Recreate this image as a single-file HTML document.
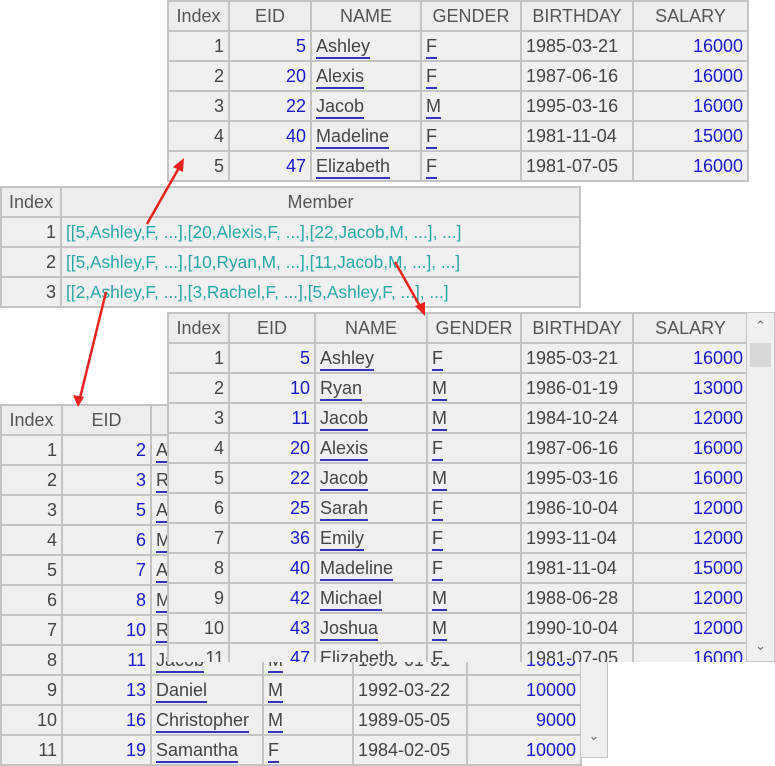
<!DOCTYPE html>
<html><head><meta charset="utf-8"><style>
body{margin:0;width:775px;height:754px;background:#fff;position:relative;overflow:hidden;font-family:"Liberation Sans",sans-serif;font-size:18px;color:#444}
table{position:absolute;border-collapse:collapse;table-layout:fixed;background:#f0f0f0}
td,th{border:2px solid #c4c4c4;height:28px;padding:0 4px;white-space:nowrap;overflow:hidden;font-weight:normal}
th{background:#ededed;color:#555;text-align:center}
td.i{text-align:right;color:#444}
td.e{text-align:right;color:#1a1acc}
td.n u{text-decoration:none;border-bottom:2px solid #3333bb;padding-bottom:1px}
td.m{color:#2aa7a7;font-size:17.3px}
.sb{position:absolute;background:#f0f0f0;border:1px solid #c4c4c4}
.btn{position:absolute;left:0;width:100%;height:26px;text-align:center;color:#666;font-size:13px;line-height:26px}
</style></head><body>

<table style="left:0;top:404px;width:580px">
<colgroup><col style="width:61px"><col style="width:89px"><col style="width:112px"><col style="width:90px"><col style="width:114px"><col style="width:114px"></colgroup>
<tr><th>Index</th><th>EID</th><th>NAME</th><th>GENDER</th><th>BIRTHDAY</th><th>SALARY</th></tr>
<tr><td class="i">1</td><td class="e">2</td><td class="n"><u>Ashley</u></td><td class="n"><u>F</u></td><td>1990-01-01</td><td class="e">10000</td></tr>
<tr><td class="i">2</td><td class="e">3</td><td class="n"><u>Rachel</u></td><td class="n"><u>F</u></td><td>1990-01-01</td><td class="e">10000</td></tr>
<tr><td class="i">3</td><td class="e">5</td><td class="n"><u>Ashley</u></td><td class="n"><u>F</u></td><td>1990-01-01</td><td class="e">10000</td></tr>
<tr><td class="i">4</td><td class="e">6</td><td class="n"><u>Matthew</u></td><td class="n"><u>M</u></td><td>1990-01-01</td><td class="e">10000</td></tr>
<tr><td class="i">5</td><td class="e">7</td><td class="n"><u>Alexis</u></td><td class="n"><u>F</u></td><td>1990-01-01</td><td class="e">10000</td></tr>
<tr><td class="i">6</td><td class="e">8</td><td class="n"><u>Megan</u></td><td class="n"><u>F</u></td><td>1990-01-01</td><td class="e">10000</td></tr>
<tr><td class="i">7</td><td class="e">10</td><td class="n"><u>Ryan</u></td><td class="n"><u>M</u></td><td>1990-01-01</td><td class="e">10000</td></tr>
<tr><td class="i">8</td><td class="e">11</td><td class="n"><u>Jacob</u></td><td class="n"><u>M</u></td><td>1990-01-01</td><td class="e">10000</td></tr>
<tr><td class="i">9</td><td class="e">13</td><td class="n"><u>Daniel</u></td><td class="n"><u>M</u></td><td>1992-03-22</td><td class="e">10000</td></tr>
<tr><td class="i">10</td><td class="e">16</td><td class="n"><u>Christopher</u></td><td class="n"><u>M</u></td><td>1989-05-05</td><td class="e">9000</td></tr>
<tr><td class="i">11</td><td class="e">19</td><td class="n"><u>Samantha</u></td><td class="n"><u>F</u></td><td>1984-02-05</td><td class="e">10000</td></tr>
</table>
<div class="sb" style="left:580px;top:404px;width:26px;height:352px"><div class="btn" style="top:318px">&#8964;</div></div>

<table style="left:167px;top:0;width:580px">
<colgroup><col style="width:61px"><col style="width:82px"><col style="width:110px"><col style="width:100px"><col style="width:112px"><col style="width:115px"></colgroup>
<tr><th>Index</th><th>EID</th><th>NAME</th><th>GENDER</th><th>BIRTHDAY</th><th>SALARY</th></tr>
<tr><td class="i">1</td><td class="e">5</td><td class="n"><u>Ashley</u></td><td class="n"><u>F</u></td><td>1985-03-21</td><td class="e">16000</td></tr>
<tr><td class="i">2</td><td class="e">20</td><td class="n"><u>Alexis</u></td><td class="n"><u>F</u></td><td>1987-06-16</td><td class="e">16000</td></tr>
<tr><td class="i">3</td><td class="e">22</td><td class="n"><u>Jacob</u></td><td class="n"><u>M</u></td><td>1995-03-16</td><td class="e">16000</td></tr>
<tr><td class="i">4</td><td class="e">40</td><td class="n"><u>Madeline</u></td><td class="n"><u>F</u></td><td>1981-11-04</td><td class="e">15000</td></tr>
<tr><td class="i">5</td><td class="e">47</td><td class="n"><u>Elizabeth</u></td><td class="n"><u>F</u></td><td>1981-07-05</td><td class="e">16000</td></tr>
</table>

<table style="left:0;top:186px;width:579px">
<colgroup><col style="width:60px"><col style="width:519px"></colgroup>
<tr><th>Index</th><th>Member</th></tr>
<tr><td class="i">1</td><td class="m">[[5,Ashley,F, ...],[20,Alexis,F, ...],[22,Jacob,M, ...], ...]</td></tr>
<tr><td class="i">2</td><td class="m">[[5,Ashley,F, ...],[10,Ryan,M, ...],[11,Jacob,M, ...], ...]</td></tr>
<tr><td class="i">3</td><td class="m">[[2,Ashley,F, ...],[3,Rachel,F, ...],[5,Ashley,F, ...], ...]</td></tr>
</table>

<div style="position:absolute;left:167px;top:312px;width:580px;height:350px;overflow:hidden;background:#f0f0f0">
<table style="left:0;top:0;width:580px">
<colgroup><col style="width:61px"><col style="width:86px"><col style="width:112px"><col style="width:94px"><col style="width:112px"><col style="width:115px"></colgroup>
<tr><th>Index</th><th>EID</th><th>NAME</th><th>GENDER</th><th>BIRTHDAY</th><th>SALARY</th></tr>
<tr><td class="i">1</td><td class="e">5</td><td class="n"><u>Ashley</u></td><td class="n"><u>F</u></td><td>1985-03-21</td><td class="e">16000</td></tr>
<tr><td class="i">2</td><td class="e">10</td><td class="n"><u>Ryan</u></td><td class="n"><u>M</u></td><td>1986-01-19</td><td class="e">13000</td></tr>
<tr><td class="i">3</td><td class="e">11</td><td class="n"><u>Jacob</u></td><td class="n"><u>M</u></td><td>1984-10-24</td><td class="e">12000</td></tr>
<tr><td class="i">4</td><td class="e">20</td><td class="n"><u>Alexis</u></td><td class="n"><u>F</u></td><td>1987-06-16</td><td class="e">16000</td></tr>
<tr><td class="i">5</td><td class="e">22</td><td class="n"><u>Jacob</u></td><td class="n"><u>M</u></td><td>1995-03-16</td><td class="e">16000</td></tr>
<tr><td class="i">6</td><td class="e">25</td><td class="n"><u>Sarah</u></td><td class="n"><u>F</u></td><td>1986-10-04</td><td class="e">12000</td></tr>
<tr><td class="i">7</td><td class="e">36</td><td class="n"><u>Emily</u></td><td class="n"><u>F</u></td><td>1993-11-04</td><td class="e">12000</td></tr>
<tr><td class="i">8</td><td class="e">40</td><td class="n"><u>Madeline</u></td><td class="n"><u>F</u></td><td>1981-11-04</td><td class="e">15000</td></tr>
<tr><td class="i">9</td><td class="e">42</td><td class="n"><u>Michael</u></td><td class="n"><u>M</u></td><td>1988-06-28</td><td class="e">12000</td></tr>
<tr><td class="i">10</td><td class="e">43</td><td class="n"><u>Joshua</u></td><td class="n"><u>M</u></td><td>1990-10-04</td><td class="e">12000</td></tr>
<tr><td class="i">11</td><td class="e">47</td><td class="n"><u>Elizabeth</u></td><td class="n"><u>F</u></td><td>1981-07-05</td><td class="e">16000</td></tr>
</table></div>
<div class="sb" style="left:746px;top:312px;width:27px;height:348px">
<div class="btn" style="top:0">&#8963;</div>
<div style="position:absolute;left:3px;top:30px;width:21px;height:24px;background:#d8d8d8"></div>
<div class="btn" style="top:320px">&#8964;</div></div>

<svg width="775" height="754" style="position:absolute;left:0;top:0" viewBox="0 0 775 754">
<g stroke="#e8231f" stroke-width="2.5" fill="#e8231f">
<line x1="147" y1="224" x2="180" y2="166"/><polygon points="184,158 173,167 183,172" stroke="none"/>
<line x1="395" y1="262" x2="421" y2="308"/><polygon points="425,316 415,306 425,302" stroke="none"/>
<line x1="106" y1="292" x2="80" y2="398"/><polygon points="78,407 73,395 84,397" stroke="none"/>
</g></svg>
</body></html>
